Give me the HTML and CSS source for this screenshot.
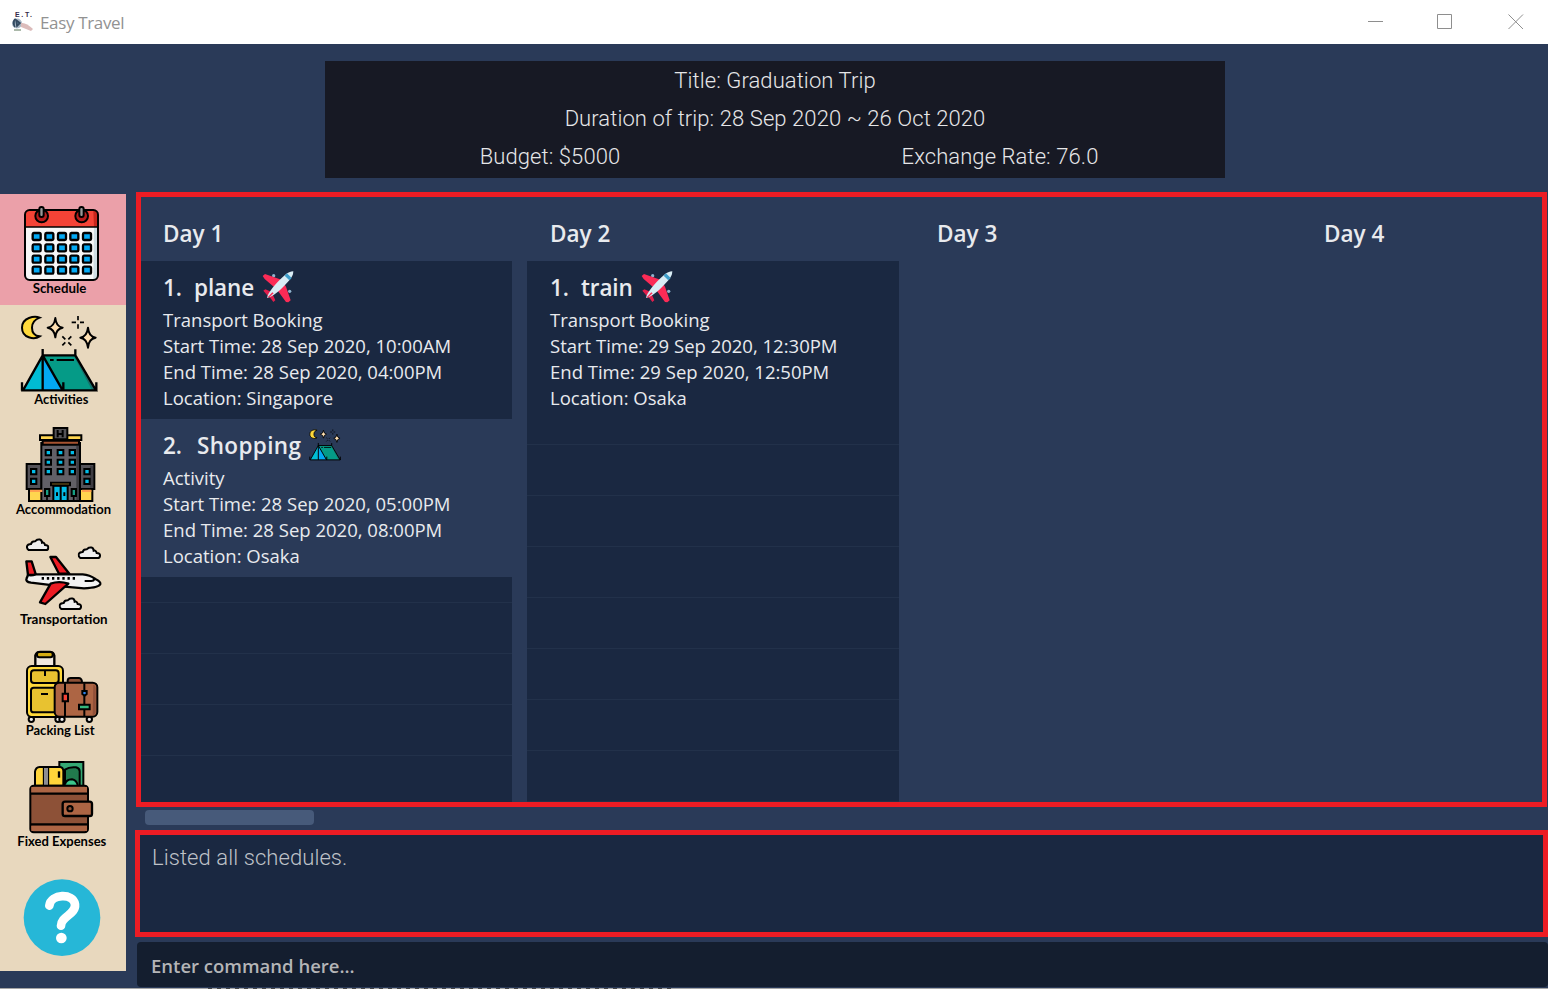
FILE: index.html
```html
<!DOCTYPE html>
<html lang="en">
<head>
<meta charset="utf-8">
<title>Easy Travel</title>
<link rel="stylesheet" href="styles.css">
</head>
<body>
<svg class="defs" width="0" height="0" aria-hidden="true">
  <symbol id="plane" viewBox="0 0 96 96">
    <circle cx="35" cy="14" r="5" fill="#8fb3cc"/><circle cx="83" cy="61" r="5" fill="#8fb3cc"/>
    <path d="M2 15 9 9 60 27 72 47 86 88 79 94 72 93 44 55 8 24Z" fill="#fb2b56"/>
    <path d="M4 59 10 55 29 63 40 88 34 93 27 83 15 72Z" fill="#e01e4c"/>
    <path d="M15 81C18 65 39 38 69 12Q82 1 94 1Q94 16 80 30C56 57 35 76 15 81Z" fill="#d9edf5"/>
    <path d="M75 7 89 21 82 28 68 14Z" fill="#3e9ecb"/><path d="M17 79 31 64 35 67 20 80Z" fill="#fb2b56"/>
  </symbol>
  <symbol id="camp" viewBox="60 30 234 234">
    <path d="M119 38C104 32 66 37 66 68C66 99 103 105 119 94C102 92 96 82 96 68C96 51 106 43 119 38Z" fill="#ffd93b" stroke="#000" stroke-width="6"/>
    <g fill="#ffe0b2" stroke="#000" stroke-width="6" stroke-linejoin="round">
      <path d="M166 39Q168 65 188 68Q168 71 166 97Q163 71 143 68Q163 65 166 39Z"/>
      <path d="M264 68Q266 95 287 98Q266 101 264 128Q261 101 241 98Q261 95 264 68Z"/>
    </g>
    <path d="M234 33V46M234 58V71M215 52H228M240 52H252M187 94 196 103M205 112 214 121M187 121 196 112M205 103 214 94" stroke="#000" stroke-width="5" fill="none"/>
    <path d="M128 150H226L286 255H189Z" fill="#059b87"/><path d="M220 150 276 255H289L227 150Z" fill="#176f69"/>
    <path d="M128 151 69 255H129Z" fill="#00bcd4"/><path d="M128 151V255H188Z" fill="#03a9f4"/>
    <path d="M128 132V256M226 133V151H128L69 256H288L226 151M128 151 188 256M66 232V257M190 232V257M289 232V257" stroke="#000" stroke-width="7" fill="none"/>
    <path d="M150 165H161M170 165H222" stroke="#000" stroke-width="6"/>
  </symbol>
  <symbol id="cloud" viewBox="0 0 70 38">
    <path d="M8 35Q2 32 3 24Q5 17 15 17Q17 9 27 9Q33 3 40 3Q47 4 48 13Q55 11 57 20Q68 20 67 29Q66 35 60 35Z" fill="#eee" stroke="#000" stroke-width="6"/>
  </symbol>
</svg>

<header class="titlebar">
  <svg class="logo" viewBox="0 0 24 24">
    <text x="4" y="6.500" class="logo-text" textLength="17">E.T.</text>
    <circle cx="6" cy="13.500" r="5" fill="#a9b8c6"/><path d="M4 9Q1 13 4 17M5 10L9 13 6 16Z" stroke="#33495f" stroke-width="1.600" fill="#4c6b80"/><path d="M3 20H10" stroke="#8fa28e" stroke-width="1.500"/>
    <path d="M10 13Q15 12 22 19L20 21 10 17Z" fill="#dcbcbb"/>
  </svg>
  <span class="app-name">Easy Travel</span>
  <svg class="window-buttons" viewBox="0 0 156 16" width="156" height="16" fill="none" stroke="#8e8e8e">
    <path d="M0 7.500H15M69.500.5H83.500V14.500H69.500ZM140.500.5 155 15M155 .5 140.500 15"/>
  </svg>
</header>

<section class="summary">
  <div class="summary-row"><span>Title: Graduation Trip</span></div>
  <div class="summary-row"><span>Duration of trip: 28 Sep 2020 ~ 26 Oct 2020</span></div>
  <div class="summary-row split"><span>Budget: $5000</span><span>Exchange Rate: 76.0</span></div>
</section>

<div class="workspace">
  <nav class="sidebar">
    <svg class="nav-item active" viewBox="0 12 378 333">
      <rect x="75" y="60" width="219" height="210" rx="14" fill="#f7f7f7"/>
      <path d="M282 110H292V255Q292 267 280 268Z" fill="#cfdde3"/>
      <path d="M75 111V74Q75 60 89 60H280Q294 60 294 74V111Z" fill="#f44336"/><path d="M280 62H285Q293 64 293 75V110H282Z" fill="#c8261d"/>
      <rect x="75" y="60" width="219" height="210" rx="14" fill="none" stroke="#000" stroke-width="6"/><path d="M75 111H294" stroke="#000" stroke-width="5"/>
      <g fill="#b71c1c" stroke="#000" stroke-width="6"><circle cx="125" cy="78" r="19"/><circle cx="245" cy="78" r="19"/></g>
      <g fill="#999" stroke="#000" stroke-width="6"><rect x="118" y="51" width="13" height="30" rx="6"/><rect x="238" y="51" width="13" height="30" rx="6"/></g>
      <g fill="#03a9f4" stroke="#000" stroke-width="7">
        <path id="calrow" d="M101 129H118Q122 129 122 133V147Q122 150 118 150H101Q98 150 98 147V133Q98 129 101 129ZM139 129H156Q160 129 160 133V147Q160 150 156 150H139Q136 150 136 147V133Q136 129 139 129ZM177 129H194Q198 129 198 133V147Q198 150 194 150H177Q174 150 174 147V133Q174 129 177 129ZM214 129H231Q235 129 235 133V147Q235 150 231 150H214Q211 150 211 147V133Q211 129 214 129ZM252 129H269Q273 129 273 133V147Q273 150 269 150H252Q249 150 249 147V133Q249 129 252 129Z"/>
        <use href="#calrow" y="34"/><use href="#calrow" y="68"/><use href="#calrow" y="101"/>
      </g>
      <text x="98" y="309" textLength="161" lengthAdjust="spacingAndGlyphs">Schedule</text>
    </svg>
    <svg class="nav-item" viewBox="0 0 378 333">
      <use href="#camp" x="60" y="30" width="234" height="234"/>
      <text x="103" y="297" textLength="162" lengthAdjust="spacingAndGlyphs">Activities</text>
    </svg>
    <svg class="nav-item" viewBox="0 3 378 333">
      <g stroke="#000" stroke-width="6">
        <path d="M87 220H130V258H87ZM235 220H277V258H235Z" fill="#ffd54f"/>
        <path d="M80 147H125V222H80ZM240 147H283V222H240Z" fill="#545258"/>
        <path d="M124 84H240V258H124Z" fill="#626067"/><path d="M128 77H237V89H128Z" fill="#a65330"/>
        <path d="M120 61H244V75H120Z" fill="#ffd54f"/><path d="M161 39H202V73H161Z" fill="#555458"/>
      </g>
      <path d="M229 93H237V255H229ZM270 152H279V218H270Z" fill="#3e3c42"/>
      <path d="M173 45V67M188 45V67M173 57H188" stroke="#000" stroke-width="6"/>
      <path d="M90 224H127V231H90ZM246 224H274V231H246Z" fill="#ff9f50"/>
      <g fill="#03bce7" stroke="#000" stroke-width="6">
        <path d="M137 105H153V121H137ZM173 105H190V121H173ZM209 105H225V121H209ZM137 134H153V149H137ZM173 134H190V149H173ZM209 134H225V149H209ZM137 162H153V178H137ZM173 162H190V178H173ZM209 162H225V178H209ZM93 162H109V178H93ZM93 191H109V207H93ZM253 162H269V178H253ZM253 191H269V207H253Z"/>
        <path d="M160 212H203V258H160Z"/>
      </g>
      <path d="M153 203H210V211H153Z" fill="#ffc640" stroke="#000" stroke-width="6"/><path d="M182 213V258M171 232V243M193 232V243" stroke="#000" stroke-width="6"/>
      <path d="M135 222H148V243H135ZM215 222H228V243H215Z" fill="#18a085" stroke="#000" stroke-width="6"/><path d="M141 240V258M221 240V258" stroke="#000" stroke-width="5"/>
      <text x="48" y="298" textLength="285" lengthAdjust="spacingAndGlyphs">Accommodation</text>
    </svg>
    <svg class="nav-item" viewBox="0 6 378 333">
      <use href="#cloud" x="78" y="40" width="70" height="38"/><use href="#cloud" x="233" y="64" width="70" height="38"/><use href="#cloud" x="176" y="217" width="70" height="38"/>
      <g stroke="#000" stroke-width="7" stroke-linejoin="round">
        <path d="M79 109H95L108 150H84Z" fill="#ed1c24"/><path d="M151 96H168L208 146H177Z" fill="#ed1c24"/>
        <path d="M84 150Q94 153 108 148H248Q269 149 286 162Q302 169 301 177Q298 188 252 190L185 184L93 173Q75 170 80 160Z" fill="#f3f3f3"/>
        <path d="M205 176 136 237 120 232 152 176Q177 167 205 176Z" fill="#ed1c24"/>
      </g>
      <path d="M125 160H226" stroke="#000" stroke-width="8" stroke-dasharray="7 8.500"/><path d="M254 168H274Q281 168 284 162" stroke="#000" stroke-width="6" fill="none"/>
      <text x="60" y="296" textLength="263" lengthAdjust="spacingAndGlyphs">Transportation</text>
    </svg>
    <svg class="nav-item" viewBox="0 9 378 333">
      <path d="M106 92V61Q110 51 121 51H150Q161 52 163 62V92" fill="#f0e8df" stroke="#000" stroke-width="7"/>
      <rect x="111" y="51" width="47" height="16" rx="7" fill="#d4ac13" stroke="#000" stroke-width="6"/>
      <g fill="#eee" stroke="#000" stroke-width="6"><circle cx="94" cy="253" r="8"/><circle cx="174" cy="253" r="8"/><circle cx="186" cy="253" r="8"/><circle cx="268" cy="253" r="8"/></g>
      <g fill="#e8c230" stroke="#000" stroke-width="6">
        <rect x="81" y="93" width="108" height="153" rx="14" fill="#ffd93b"/><rect x="93" y="106" width="83" height="38" rx="9"/><rect x="93" y="158" width="83" height="74" rx="8"/>
      </g>
      <path d="M135 108V123M123 177H144" stroke="#000" stroke-width="6"/>
      <path d="M203 143V136Q204 129 212 129H237Q246 130 246 143" fill="#8d5137" stroke="#000" stroke-width="6"/>
      <rect x="164" y="143" width="128" height="102" rx="14" fill="#ad6544" stroke="#000" stroke-width="6"/><path d="M280 149Q287 151 287 162V234Q285 240 278 241Z" fill="#915039"/>
      <path d="M195 145V244M253 145V244" stroke="#000" stroke-width="6"/>
      <g stroke="#000" stroke-width="6"><path d="M188 176H204V199H188Z" fill="#f44336"/><path d="M247 168H260V177L254 182 247 177Z" fill="#2f80e8"/><path d="M237 209H269V223H237Z" fill="#35b77c"/></g>
      <text x="77" y="299" textLength="207" lengthAdjust="spacingAndGlyphs">Packing List</text>
    </svg>
    <svg class="nav-item" viewBox="0 12 378 333">
      <g stroke="#000" stroke-width="6">
        <path d="M178 51H250V123H178Z" fill="#35a873"/><path d="M195 74Q207 65 228 67Q239 70 239 79V123H195Z" fill="#217a4d"/>
        <path d="M195 119Q198 103 216 103Q229 105 233 120" fill="#3bc58b"/>
        <path d="M105 122V80Q107 67 119 66H180Q190 67 190 79V122Z" fill="#ffd43a"/>
      </g>
      <path d="M138 69V121" stroke="#000" stroke-width="19"/><path d="M138 69V121" stroke="#8d8d92" stroke-width="12"/><path d="M177 79V98" stroke="#000" stroke-width="7"/>
      <rect x="91" y="122" width="173" height="140" rx="10" fill="#8d5137" stroke="#000" stroke-width="6"/>
      <path d="M94 126H261V144H94ZM94 242H261V258H94Z" fill="#ad6544"/><path d="M92 146H264M92 238H264" stroke="#000" stroke-width="7"/>
      <rect x="188" y="170" width="88" height="43" rx="7" fill="#ad6544" stroke="#000" stroke-width="7"/><circle cx="210" cy="191" r="8" fill="#8d5137" stroke="#000" stroke-width="6"/>
      <text x="52" y="303" textLength="267" lengthAdjust="spacingAndGlyphs">Fixed Expenses</text>
    </svg>
    <svg class="nav-item" viewBox="0 0 378 333">
      <circle cx="186" cy="173" r="115" fill="#26b7d7"/>
      <path d="M148 137C152 101 220 98 225 133C228 164 183 168 183 197" fill="none" stroke="#fff" stroke-width="26" stroke-linecap="round"/><circle cx="184" cy="234" r="16" fill="#fff"/>
    </svg>
  </nav>

  <main class="main">
    <section class="board">
      <article class="day first">
        <h2>Day 1</h2>
        <div class="list">
          <div class="card">
            <h3><span class="num">1.</span><span class="name">plane</span><svg><use href="#plane"/></svg></h3>
            <p>Transport Booking</p><p>Start Time: 28 Sep 2020, 10:00AM</p><p>End Time: 28 Sep 2020, 04:00PM</p><p>Location: Singapore</p>
          </div>
          <div class="card alt">
            <h3><span class="num">2.</span><span class="name">Shopping</span><svg><use href="#camp"/></svg></h3>
            <p>Activity</p><p>Start Time: 28 Sep 2020, 05:00PM</p><p>End Time: 28 Sep 2020, 08:00PM</p><p>Location: Osaka</p>
          </div>
          <div class="empty"></div>
        </div>
      </article>
      <article class="day">
        <h2>Day 2</h2>
        <div class="list">
          <div class="card">
            <h3><span class="num">1.</span><span class="name">train</span><svg><use href="#plane"/></svg></h3>
            <p>Transport Booking</p><p>Start Time: 29 Sep 2020, 12:30PM</p><p>End Time: 29 Sep 2020, 12:50PM</p><p>Location: Osaka</p>
          </div>
          <div class="empty"></div>
        </div>
      </article>
      <article class="day"><h2>Day 3</h2></article>
      <article class="day"><h2>Day 4</h2></article>
    </section>
    <div class="scrollbar"><div class="thumb"></div></div>
    <section class="result">Listed all schedules.</section>
    <div class="command">Enter command here...</div>
  </main>
</div>
<footer class="edge"></footer>
</body>
</html>
```

FILE: styles.css
```css
* { box-sizing: border-box; }
body {
  margin: 0;
  width: 1548px;
  height: 989px;
  overflow: hidden;
  display: flex;
  flex-direction: column;
  background: #2a3a58;
  font-family: "Open Sans", "Noto Sans", sans-serif;
}
.defs { display: none; }
h2, h3, p { margin: 0; }

.titlebar {
  flex: none;
  height: 44px;
  display: flex;
  align-items: center;
  padding-left: 11px;
  background: #fff;
  color: #929292;
}
.logo { width: 24px; height: 24px; }
.logo-text { font: bold 7px "Liberation Sans", sans-serif; fill: #352c4a; }
.app-name { margin: 0 0 0 5px; font-size: 17px; letter-spacing: -0.35px; }
.window-buttons { margin: 0 24px 0 auto; }

.summary {
  flex: none;
  width: 900px;
  height: 117px;
  margin: 17px 0 0 325px;
  padding-top: 1px;
  background: #171924;
  color: #e6e6e8;
  font: 300 22px/38px Roboto, sans-serif;
  letter-spacing: 0.08px;
}
.summary-row { display: flex; justify-content: center; height: 38px; }
.split > span { flex: 1; text-align: center; }

.workspace { display: flex; flex: none; height: 810px; }
.sidebar {
  width: 126px;
  height: 777px;
  margin-top: 16px;
  background: #e8d8be;
  display: flex;
  flex-direction: column;
}
.nav-item { display: block; width: 126px; height: 111px; }
.nav-item.active { background: #eba0a9; }
.nav-item text { font: bold 38px Lato, sans-serif; fill: #000; }

.main { width: 1413px; margin-left: 9px; display: flex; flex-direction: column; }
.board {
  width: 1411px;
  height: 615px;
  margin: 14px 0 0 1px;
  border: 5px solid #ed1c24;
  display: grid;
  grid-template-columns: 371px 372px 372px 372px;
  column-gap: 15px;
  overflow: hidden;
}
.day { --inset: 23px; display: flex; flex-direction: column; min-height: 0; color: #e8eaee; }
.day.first { --inset: 22px; }
.day h2 { height: 64px; flex: none; padding-left: var(--inset); font-size: 22.5px; line-height: 73px; font-weight: 600; }
.list { flex: 1; display: flex; flex-direction: column; background: #1a2841; min-height: 0; }
.card { height: 158px; flex: none; padding: 7px 0 0 var(--inset); }
.card.alt { background: #2a3a58; }
.card h3 { display: flex; align-items: center; height: 39px; padding-bottom: 1px; font-size: 22.5px; font-weight: 600; letter-spacing: -0.1px; }
.num { width: 31px; }
.card.alt .num { width: 34px; }
.card.alt .name { letter-spacing: 0.35px; }
.card h3 svg { width: 32px; height: 32px; margin-left: 8px; }
.card p { height: 26px; line-height: 26px; font-size: 18.5px; white-space: nowrap; }
.empty {
  flex: 1;
  background: repeating-linear-gradient(to bottom, transparent 0 25px, #22314a 25px 26px, transparent 26px 51px);
}

.scrollbar { flex: none; height: 23px; padding: 3px 0 0 10px; }
.thumb { width: 169px; height: 15px; border-radius: 4px; background: #475a7a; }
.result {
  flex: none;
  height: 107px;
  border: 5px solid #ed1c24;
  background: #1a2841;
  color: #bfc2c8;
  padding: 5px 12px;
  font: 300 22px/36px Roboto, sans-serif;
  letter-spacing: 0.08px;
}
.command {
  height: 45px;
  flex: none;
  margin: 5px 0 0 2px;
  padding-left: 14px;
  border-radius: 4px;
  background: #141e2f;
  color: #b4b5b7;
  font-size: 18.5px;
  font-weight: 600;
  line-height: 47px;
}
.edge {
  flex: none;
  height: 1px;
  background: repeating-linear-gradient(to right, #444 0 4px, #a5a5a5 4px 9px) 208px 0 / 467px 1px no-repeat #a5a5a5;
}
```
